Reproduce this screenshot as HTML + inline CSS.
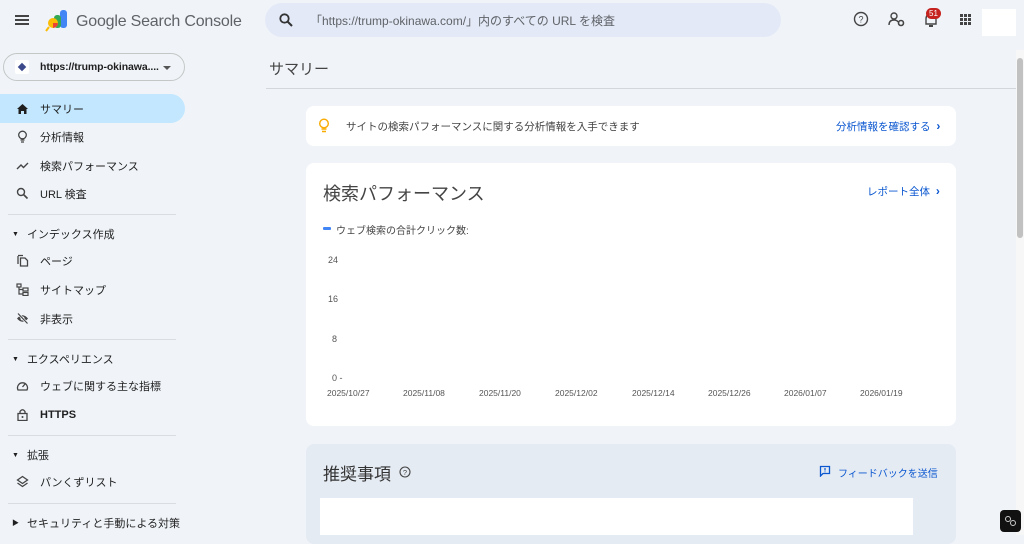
<!DOCTYPE html>
<html><head><meta charset="utf-8"><style>
*{box-sizing:border-box;margin:0;padding:0}
body{width:1024px;height:535px;overflow:hidden;background:#f0f4f9;font-family:"Liberation Sans","Noto Sans CJK JP",sans-serif;color:#1f1f1f;position:relative}
.a{position:absolute}
.nav{font-size:11px;color:#1f1f1f}
.item{position:absolute;left:0;width:185px;height:29px;display:flex;align-items:center;padding-left:40px}
.ico{position:absolute;left:16px;top:8px;width:13px;height:13px}
.hr{position:absolute;left:8px;width:168px;height:1px;background:#dadce0}
.sec{position:absolute;left:12px;font-size:11px;display:flex;align-items:center;gap:8px}
.card{position:absolute;background:#fff;border-radius:8px}
.blue{color:#0b57d0}
.yl{position:absolute;left:328px;font-size:9px;color:#555;line-height:10px}
</style></head><body>
<div class="a" style="left:15px;top:15px;width:14px;height:2px;background:#444;box-shadow:0 4px 0 #444,0 8px 0 #444"></div>
<svg class="a" style="left:45px;top:10px" width="24" height="22" viewBox="0 0 24 22"><rect x="15" y="0" width="7" height="18" rx="3" fill="#4285f4"/><rect x="9" y="5" width="7" height="13" rx="3" fill="#34a853"/><circle cx="8" cy="13" r="5" fill="#fbbc04"/><path d="M8 13 L13 13 A5 5 0 0 1 8 18Z" fill="#ea4335"/><line x1="4" y1="17" x2="1" y2="21" stroke="#fbbc04" stroke-width="2"/></svg>
<div class="a" style="left:76px;top:13px;font-size:16px;color:#5f6368;letter-spacing:-0.2px">Google Search Console</div>
<div class="a" style="left:265px;top:3px;width:516px;height:34px;border-radius:17px;background:#e3e9f6"></div>
<svg class="a" style="left:279px;top:13px" width="14" height="14" viewBox="0 0 14 14"><circle cx="5.5" cy="5.5" r="4.2" fill="none" stroke="#333" stroke-width="1.8"/><line x1="8.5" y1="8.5" x2="13" y2="13" stroke="#333" stroke-width="2"/></svg>
<div class="a" style="left:310px;top:12px;font-size:12px;color:#5f6368">「https://trump-okinawa.com/」内のすべての URL を検査</div>
<svg class="a" style="left:853px;top:11px" width="16" height="16" viewBox="0 0 16 16"><circle cx="8" cy="8" r="6.5" fill="none" stroke="#444" stroke-width="1.4"/><text x="8" y="11.5" font-size="9" text-anchor="middle" fill="#444" font-family="Liberation Sans">?</text></svg>
<svg class="a" style="left:888px;top:11px" width="18" height="16" viewBox="0 0 18 16"><circle cx="6" cy="5" r="3" fill="none" stroke="#444" stroke-width="1.4"/><path d="M1 14 Q1 9 6 9 Q9 9 10 11" fill="none" stroke="#444" stroke-width="1.4"/><circle cx="13" cy="12" r="2.5" fill="none" stroke="#444" stroke-width="1.6"/></svg>
<svg class="a" style="left:924px;top:12px" width="14" height="16" viewBox="0 0 14 16"><path d="M2 12 L2 7 Q2 2 7 2 Q12 2 12 7 L12 12Z" fill="none" stroke="#444" stroke-width="1.4"/><rect x="5" y="13" width="4" height="2" fill="#444"/></svg>
<div class="a" style="left:926px;top:8px;width:15px;height:11px;border-radius:6px;background:#c5221f;color:#fff;font-size:8px;text-align:center;line-height:11px">51</div>
<div class="a" style="left:960px;top:14px;width:3px;height:3px;background:#444;box-shadow:4px 0 #444,8px 0 #444,0 4px #444,4px 4px #444,8px 4px #444,0 8px #444,4px 8px #444,8px 8px #444"></div>
<div class="a" style="left:982px;top:9px;width:34px;height:27px;background:#fff"></div>
<div class="a" style="left:3px;top:53px;width:182px;height:28px;border:1px solid #c4c7c5;border-radius:14px"></div>
<div class="a" style="left:15px;top:60px;width:14px;height:14px;background:#fff;border-radius:2px"></div>
<div class="a" style="left:19px;top:64px;width:6px;height:6px;background:#3c4a8c;transform:rotate(45deg)"></div>
<div class="a" style="left:40px;top:61px;font-size:10.5px;font-weight:bold;color:#1f1f1f;letter-spacing:-0.1px">https://trump-okinawa....</div>
<div class="a" style="left:163px;top:66px;border:4px solid transparent;border-top:4px solid #555"></div>
<div class="nav">
<div class="item" style="top:94px;background:#c2e7ff;border-radius:0 15px 15px 0">サマリー<svg class="ico" viewBox="0 0 13 13"><path d="M1 7 L6.5 2 L12 7 L10.5 7 L10.5 12 L8 12 L8 9 L5 9 L5 12 L2.5 12 L2.5 7Z" fill="#1f1f1f"/></svg></div>
<div class="item" style="top:122px">分析情報<svg class="ico" viewBox="0 0 13 13"><circle cx="6.5" cy="5" r="3.8" fill="none" stroke="#444" stroke-width="1.3"/><path d="M4.5 10 H8.5 M5 12 H8" stroke="#444" stroke-width="1.3"/></svg></div>
<div class="item" style="top:151px">検索パフォーマンス<svg class="ico" viewBox="0 0 13 13"><path d="M1 10 L5 6 L7.5 8.5 L12 4" fill="none" stroke="#444" stroke-width="1.4"/></svg></div>
<div class="item" style="top:179px">URL 検査<svg class="ico" viewBox="0 0 13 13"><circle cx="5" cy="5" r="3.5" fill="none" stroke="#444" stroke-width="1.4"/><line x1="7.5" y1="7.5" x2="11.5" y2="11.5" stroke="#444" stroke-width="1.6"/></svg></div>
<div class="hr" style="top:214px"></div>
<div class="sec" style="top:226px"><span style="font-size:7px">▼</span>インデックス作成</div>
<div class="item" style="top:246px">ページ<svg class="ico" viewBox="0 0 13 13"><path d="M2 2 V10 M2 1.5 H7" stroke="#444" stroke-width="1.3" fill="none"/><path d="M4.5 4 H9 L11.5 6.5 V12 H4.5Z" fill="none" stroke="#444" stroke-width="1.3"/></svg></div>
<div class="item" style="top:275px">サイトマップ<svg class="ico" viewBox="0 0 13 13"><rect x="1" y="1" width="4" height="3" fill="none" stroke="#444" stroke-width="1.2"/><rect x="7" y="5" width="5" height="3" fill="none" stroke="#444" stroke-width="1.2"/><rect x="7" y="9.5" width="5" height="3" fill="none" stroke="#444" stroke-width="1.2"/><path d="M3 4 V11 H7 M3 6.5 H7" fill="none" stroke="#444" stroke-width="1.2"/></svg></div>
<div class="item" style="top:304px">非表示<svg class="ico" viewBox="0 0 13 13"><path d="M1 6.5 Q6.5 0 12 6.5 Q6.5 13 1 6.5Z" fill="#444"/><circle cx="6.5" cy="6.5" r="2" fill="#f0f4f9"/><line x1="2" y1="1.5" x2="11.5" y2="11.5" stroke="#f0f4f9" stroke-width="2.5"/><line x1="2" y1="1.5" x2="11.5" y2="11.5" stroke="#444" stroke-width="1.2"/></svg></div>
<div class="hr" style="top:339px"></div>
<div class="sec" style="top:351px"><span style="font-size:7px">▼</span>エクスペリエンス</div>
<div class="item" style="top:371px">ウェブに関する主な指標<svg class="ico" viewBox="0 0 13 13"><path d="M2 11 A5 5 0 1 1 11 11 Z" fill="none" stroke="#444" stroke-width="1.3"/><line x1="6.5" y1="8" x2="9" y2="5" stroke="#444" stroke-width="1.3"/></svg></div>
<div class="item" style="top:400px;font-weight:bold">HTTPS<svg class="ico" viewBox="0 0 13 13"><rect x="2" y="5.5" width="9" height="7" fill="none" stroke="#444" stroke-width="1.3"/><path d="M4 5.5 V3.5 Q6.5 0 9 3.5 V5.5" fill="none" stroke="#444" stroke-width="1.3"/><circle cx="6.5" cy="9" r="1" fill="#444"/></svg></div>
<div class="hr" style="top:435px"></div>
<div class="sec" style="top:447px"><span style="font-size:7px">▼</span>拡張</div>
<div class="item" style="top:467px">パンくずリスト<svg class="ico" viewBox="0 0 13 13"><path d="M6.5 1.5 L11.5 5 L6.5 8.5 L1.5 5Z" fill="none" stroke="#444" stroke-width="1.3"/><path d="M1.5 8 L6.5 11.5 L11.5 8" fill="none" stroke="#444" stroke-width="1.3"/></svg></div>
<div class="hr" style="top:503px"></div>
<div class="sec" style="top:515px"><span style="font-size:7px">▶</span>セキュリティと手動による対策</div>
</div>
<div class="a" style="left:269px;top:58px;font-size:15px;color:#444">サマリー</div>
<div class="a" style="left:266px;top:88px;width:750px;height:1px;background:#d3d7dc"></div>
<div class="a" style="left:1016px;top:50px;width:8px;height:485px;background:#f7f7f7"></div>
<div class="a" style="left:1017px;top:58px;width:6px;height:180px;background:#c1c1c1;border-radius:3px"></div>
<div class="card" style="left:306px;top:106px;width:650px;height:40px"></div>
<svg class="a" style="left:318px;top:118px" width="12" height="15" viewBox="0 0 12 15"><circle cx="6" cy="5.5" r="4.3" fill="none" stroke="#f9ab00" stroke-width="1.4"/><path d="M3.5 11 H8.5 M4 13.5 H8" stroke="#f9ab00" stroke-width="1.4"/></svg>
<div class="a" style="left:346px;top:119px;font-size:10.5px;color:#444">サイトの検索パフォーマンスに関する分析情報を入手できます</div>
<div class="a blue" style="left:836px;top:119px;font-size:10.5px">分析情報を確認する&nbsp;&nbsp;<b style="font-size:12px">›</b></div>
<div class="card" style="left:306px;top:163px;width:650px;height:263px"></div>
<div class="a" style="left:323px;top:180px;font-size:18px;color:#444">検索パフォーマンス</div>
<div class="a blue" style="left:867px;top:184px;font-size:10.5px">レポート全体&nbsp;&nbsp;<b style="font-size:12px">›</b></div>
<div class="a" style="left:323px;top:227px;width:8px;height:3px;background:#4285f4;border-radius:1px"></div>
<div class="a" style="left:336px;top:222px;font-size:10px;color:#444">ウェブ検索の合計クリック数:</div>
<div class="yl" style="top:255px">24</div>
<div class="yl" style="top:294px">16</div>
<div class="yl" style="top:334px;left:332px">8</div>
<div class="yl" style="top:373px;left:332px">0&nbsp;-</div>
<div class="a" style="left:327px;top:388px;font-size:8.5px;color:#555">
<span class="a" style="left:0">2025/10/27</span><span class="a" style="left:76px">2025/11/08</span><span class="a" style="left:152px">2025/11/20</span><span class="a" style="left:228px">2025/12/02</span><span class="a" style="left:305px">2025/12/14</span><span class="a" style="left:381px">2025/12/26</span><span class="a" style="left:457px">2026/01/07</span><span class="a" style="left:533px">2026/01/19</span></div>
<div class="a" style="left:306px;top:444px;width:650px;height:100px;background:#e5ebf3;border-radius:8px"></div>
<div class="a" style="left:323px;top:460px;font-size:17px;color:#333">推奨事項</div>
<svg class="a" style="left:399px;top:466px" width="12" height="12" viewBox="0 0 12 12"><circle cx="6" cy="6" r="5" fill="none" stroke="#444" stroke-width="1.1"/><text x="6" y="9" font-size="7.5" text-anchor="middle" fill="#444" font-family="Liberation Sans">?</text></svg>
<svg class="a" style="left:819px;top:465px" width="12" height="12" viewBox="0 0 12 12"><path d="M1.5 1.5 H10.5 V8.5 H4 L1.5 11Z" fill="none" stroke="#0b57d0" stroke-width="1.3"/><path d="M6 3 V5.5 M6 6.5 V7.3" stroke="#0b57d0" stroke-width="1.2"/></svg>
<div class="a blue" style="left:838px;top:465px;font-size:10px">フィードバックを送信</div>
<div class="a" style="left:320px;top:498px;width:593px;height:37px;background:#fff"></div>
<div class="a" style="left:1000px;top:510px;width:21px;height:22px;background:#111;border-radius:4px"></div>
<div class="a" style="left:1005px;top:516px;width:6px;height:6px;border:1.5px solid #ccc;border-radius:50%"></div>
<div class="a" style="left:1010px;top:520px;width:6px;height:6px;border:1.5px solid #ccc;border-radius:50%"></div>
</body></html>
